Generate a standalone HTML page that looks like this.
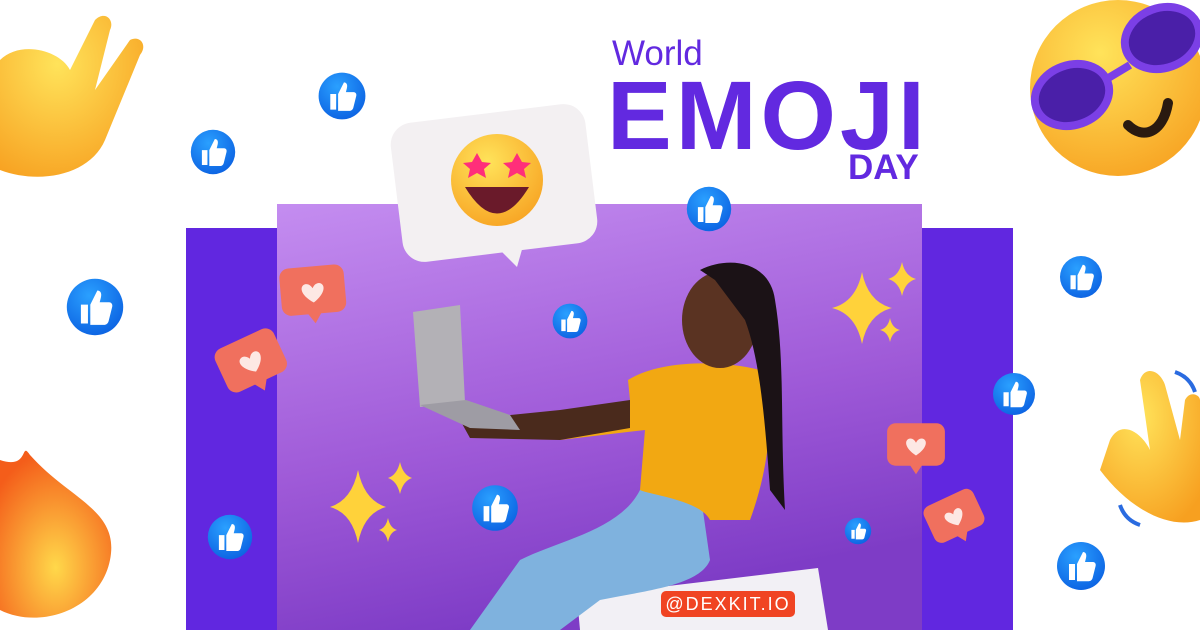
<!DOCTYPE html>
<html><head><meta charset="utf-8"><style>
html,body{margin:0;padding:0;background:#fff;}
.w{position:relative;width:1200px;height:630px;overflow:hidden;background:#fff;font-family:"Liberation Sans",sans-serif;}
svg{position:absolute;left:0;top:0}
.t{position:absolute;color:#6229e0;font-weight:bold;}
.lab{position:absolute;left:661px;top:591px;width:134px;height:26px;background:#f04423;border-radius:5px;color:#fff;font-size:18px;line-height:26px;text-align:center;letter-spacing:2px;}
</style></head><body><div class="w">
<svg width="1200" height="630" viewBox="0 0 1200 630">
<defs>
<linearGradient id="bg" x1="0" y1="0" x2="0.3" y2="1"><stop offset="0" stop-color="#c48df0"/><stop offset="0.6" stop-color="#9f5ad8"/><stop offset="1" stop-color="#7e3cc6"/></linearGradient>
<radialGradient id="bl" cx="0.4" cy="0.3" r="0.8"><stop offset="0" stop-color="#2aa0ff"/><stop offset="1" stop-color="#0a5ee0"/></radialGradient>
<radialGradient id="ye" cx="0.4" cy="0.3" r="0.8"><stop offset="0" stop-color="#ffe35a"/><stop offset="1" stop-color="#f7a020"/></radialGradient>
<radialGradient id="fi" cx="0.5" cy="0.7" r="0.7"><stop offset="0" stop-color="#ffd84a"/><stop offset="1" stop-color="#f45d1a"/></radialGradient>
<g id="th"><circle r="12" fill="url(#bl)"/><path fill="#fff" d="M-6-1h3v8h-3z M-2-1l3-6c1.2 0 2 1 1.5 3L2-2h4c1 0 1.6 1 1.3 2l-1.5 6c-.3 1-1 1.6-2 1.6H-2z"/></g>
<g id="hb"><rect x="-34" y="-28" width="68" height="50" rx="10" fill="#f0705e"/><path d="M-8 20l8 12 8-12z" fill="#f0705e"/><path d="M0 10c-14-9-14-19-7-20 4 0 6 3 7 5 1-2 3-5 7-5 7 1 7 11-7 20z" fill="#fde8e4"/></g>
</defs>
<rect x="186" y="228" width="827" height="402" fill="#6127e0"/>
<rect x="277" y="204" width="645" height="426" fill="url(#bg)"/>
<polygon points="577,597 818,568 828,630 580,630" fill="#f2f0f5"/>
<path d="M470 630 L520 560 C560 540 620 530 640 490 L700 490 710 560 C700 585 650 590 600 600 L560 630Z" fill="#7fb2de"/>
<path d="M628 380 C660 360 720 360 760 370 C775 400 772 460 750 520 L710 520 C700 500 650 495 640 490 L645 430 L560 440 L560 428 L630 400Z" fill="#f2a812"/>
<path d="M460 420 L560 410 L630 400 L630 428 L560 440 L470 438Z" fill="#4a2a1c"/>
<ellipse cx="720" cy="320" rx="38" ry="48" fill="#5a3322"/>
<path d="M700 270 C730 255 770 262 775 300 C785 360 780 420 785 510 L770 490 C765 420 760 360 745 320 L715 280Z" fill="#1b1216"/>
<polygon points="413,312 460,305 465,402 420,407" fill="#b3b1b6"/>
<polygon points="420,405 466,400 510,415 520,430 470,428" fill="#9e9ca4"/>
<rect x="396" y="113" width="196" height="140" rx="22" fill="#f3f0f2" transform="rotate(-7 494 183)"/>
<path d="M495 245 l22 22 8-28z" fill="#f3f0f2"/>
<circle cx="497" cy="180" r="46" fill="url(#ye)"/>
<path d="M465 187 Q497 240 529 187Z" fill="#6a1a2a"/>
<path d="M472 162l5-9 5 9 9 1-7 6 2 9-9-5-9 5 2-9-7-6z M512 162l5-9 5 9 9 1-7 6 2 9-9-5-9 5 2-9-7-6z" fill="#ff2e7a"/>
<use href="#hb" transform="translate(313 293) rotate(-5) scale(0.95)"/>
<use href="#hb" transform="translate(252 363) rotate(-25) scale(0.95)"/>
<use href="#hb" transform="translate(916 447) scale(0.85)"/>
<use href="#hb" transform="translate(955 518) rotate(-25) scale(0.8)"/>
<g fill="#ffd23a">
<path d="M862 272 q6 30 30 36 q-24 6 -30 36 q-6 -30 -30 -36 q24 -6 30 -36z"/>
<path d="M902 262 q3 14 14 17 q-11 3 -14 17 q-3 -14 -14 -17 q11 -3 14 -17z"/>
<path d="M890 318 q2 10 10 12 q-8 2 -10 12 q-2 -10 -10 -12 q8 -2 10 -12z"/>
<path d="M358 470 q6 30 28 37 q-22 6 -28 36 q-6 -30 -28 -36 q22 -7 28 -37z"/>
<path d="M400 462 q3 13 12 16 q-9 3 -12 16 q-3 -13 -12 -16 q9 -3 12 -16z"/>
<path d="M388 518 q2 10 9 12 q-7 2 -9 12 q-2 -10 -9 -12 q7 -2 9 -12z"/>
</g>
<circle cx="1118" cy="88" r="88" fill="url(#ye)"/>
<ellipse cx="1072" cy="95" rx="38" ry="30" fill="#4a1fa8" stroke="#7b3fe6" stroke-width="8" transform="rotate(-20 1072 95)"/>
<ellipse cx="1162" cy="38" rx="38" ry="30" fill="#4a1fa8" stroke="#7b3fe6" stroke-width="8" transform="rotate(-20 1162 38)"/>
<path d="M1105 80 l25 -15" stroke="#7b3fe6" stroke-width="8"/>
<path d="M1128 125 c15 15 35 8 40-22" stroke="#2a1a10" stroke-width="10" fill="none" stroke-linecap="round"/>
<path d="M0 60 C20 40 60 50 70 70 L95 20 C105 10 115 20 110 30 L95 90 L130 40 C140 35 148 45 140 55 L105 140 C90 175 40 185 0 170Z" fill="url(#ye)"/>
<path d="M0 460 C30 470 20 440 30 455 C70 500 120 510 110 560 C100 610 40 630 0 610Z" fill="url(#fi)"/>
<path d="M1110 440 C1120 420 1140 430 1150 450 L1140 380 C1145 365 1160 370 1165 385 L1180 440 L1185 400 C1190 390 1200 395 1200 400 L1200 520 C1170 530 1130 510 1100 470Z" fill="url(#ye)"/>
<path d="M1175 372 q15 5 20 20 M1120 505 q5 15 20 20" stroke="#2a6be0" stroke-width="4" fill="none"/>
<use href="#th" transform="translate(342 96) scale(1.95)"/>
<use href="#th" transform="translate(213 152) scale(1.85)"/>
<use href="#th" transform="translate(95 307) scale(2.35)"/>
<use href="#th" transform="translate(709 209) scale(1.85)"/>
<use href="#th" transform="translate(570 321) scale(1.45)"/>
<use href="#th" transform="translate(1081 277) scale(1.75)"/>
<use href="#th" transform="translate(1014 394) scale(1.75)"/>
<use href="#th" transform="translate(495 508) scale(1.9)"/>
<use href="#th" transform="translate(230 537) scale(1.85)"/>
<use href="#th" transform="translate(858 531) scale(1.1)"/>
<use href="#th" transform="translate(1081 566) scale(2)"/>
</svg>
<div class="t" style="left:612px;top:34px;font-size:35px;font-weight:normal;">World</div>
<div class="t" style="left:607px;top:60px;font-size:97px;letter-spacing:4px;">EMOJI</div>
<div class="t" style="left:848px;top:148px;font-size:35px;">DAY</div>
<div class="lab">@DEXKIT.IO</div>
</div></body></html>
